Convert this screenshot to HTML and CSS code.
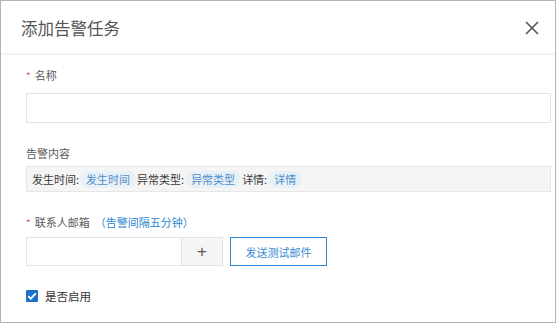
FILE: index.html
```html
<!DOCTYPE html>
<html lang="zh">
<head>
<meta charset="utf-8">
<title>添加告警任务</title>
<link rel="stylesheet" href="styles.css">
</head>
<body>
<div class="dialog">
  <div class="header">
    <div class="title">添加告警任务</div>
    <svg class="close" width="14" height="14" viewBox="0 0 14 14"><path d="M1 1L13 13M13 1L1 13" stroke="#555" stroke-width="1.6" fill="none"/></svg>
  </div>
  <div class="body">
    <div class="label label-first"><span class="req">*</span>名称</div>
    <div class="input wide"></div>

    <div class="label label-content">告警内容</div>
    <div class="content-box">
      <span class="plain">发生时间:</span><span class="tag">发生时间</span>
      <span class="plain">异常类型:</span><span class="tag">异常类型</span>
      <span class="plain">详情:</span><span class="tag">详情</span>
    </div>

    <div class="label label-mail"><span class="req">*</span>联系人邮箱<span class="hint">（告警间隔五分钟）</span></div>
    <div class="mail-row">
      <div class="input mail"></div>
      <div class="plus">+</div>
      <div class="btn">发送测试邮件</div>
    </div>

    <div class="check-row">
      <span class="checkbox"><svg width="12" height="12" viewBox="0 0 12 12"><path d="M2.3 6.2L4.8 8.6L9.8 3.4" stroke="#fff" stroke-width="1.9" fill="none"/></svg></span>
      <span class="check-label">是否启用</span>
    </div>
  </div>
</div>
</body>
</html>
```
FILE: styles.css
```css
* { box-sizing: border-box; }
html, body { margin: 0; padding: 0; background: #fff; }
body {
  font-family: "Noto Sans CJK SC", "Noto Sans", "Liberation Sans", sans-serif;
  color: #555;
}
.dialog {
  width: 556px;
  height: 323px;
  border: 1px solid #b4b4b4;
  background: #fff;
  overflow: hidden;
}
.header {
  height: 54px;
  border-bottom: 2px solid #f2f2f2;
  display: flex;
  align-items: center;
  justify-content: space-between;
  padding: 0 16px 0 20px;
}
.title {
  font-size: 16.5px;
  color: #555;
  line-height: 20px;
  margin-top: 1px;
}
.close { display: block; margin-top: 1px; }
.body {
  padding: 0 4px 0 25px;
  display: flex;
  flex-direction: column;
}
.label {
  font-size: 11px;
  line-height: 16px;
  color: #5a5a5a;
}
.req {
  color: #e5534b;
  margin-right: 4px;
  font-size: 10px;
}
.label-first { margin-top: 12px; margin-bottom: 9px; }
.label-content { margin-top: 22px; margin-bottom: 5px; }
.label-mail { margin-top: 22px; margin-bottom: 6px; }
.hint { color: #2b87d3; margin-left: 5px; }
.input {
  border: 1px solid #e2e2e2;
  background: #fff;
}
.wide { height: 30px; }
.content-box {
  height: 26px;
  background: #f5f5f5;
  border: 1px solid #e6e6e6;
  display: flex;
  align-items: center;
  padding-left: 5px;
  font-size: 11px;
}
.plain { color: #3a3a3a; margin-right: 1px; }
.tag {
  background: #e8f0f8;
  color: #4f8fcb;
  border-radius: 9px;
  padding: 1px 6px;
  line-height: 15px;
  margin-right: 1px;
}
.mail-row {
  display: flex;
  align-items: stretch;
  height: 29px;
}
.mail { width: 156px; }
.plus {
  width: 41px;
  background: #f5f5f5;
  border: 1px solid #e2e2e2;
  border-left: none;
  display: flex;
  align-items: center;
  justify-content: center;
  font-size: 17px;
  color: #555;
  font-family: "Liberation Sans", sans-serif;
}
.btn {
  margin-left: 7px;
  width: 97px;
  border: 1px solid #2f86d6;
  color: #3a8bd5;
  font-size: 11px;
  display: flex;
  align-items: center;
  justify-content: center;
}
.check-row {
  margin-top: 22px;
  display: flex;
  align-items: center;
  gap: 7px;
}
.checkbox {
  width: 12px;
  height: 12px;
  background: #1a73c9;
  border-radius: 1px;
  display: block;
}
.checkbox svg { display: block; }
.check-label { font-size: 11.5px; color: #333; line-height: 16px; }
```
